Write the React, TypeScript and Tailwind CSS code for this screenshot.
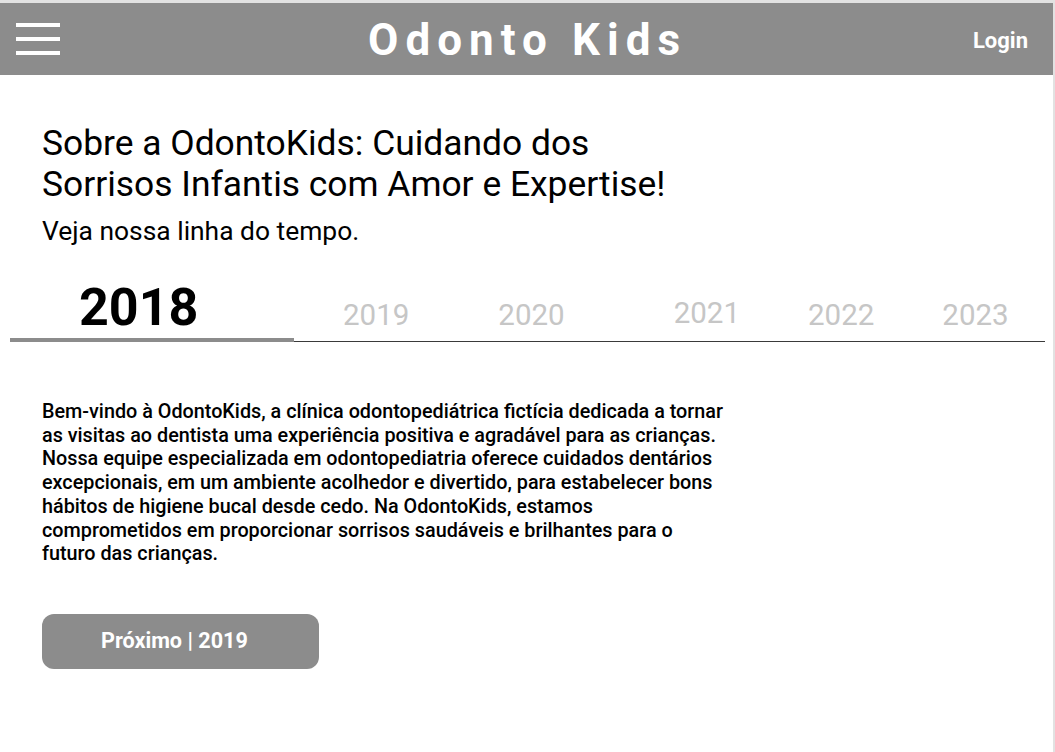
import React from "react";

const years = [
  { label: "2019", cls: "ml-[49px]" },
  { label: "2020", cls: "ml-[89px]" },
  { label: "2021", cls: "ml-[109px] -translate-y-[2px]" },
  { label: "2022", cls: "ml-[68px]" },
  { label: "2023", cls: "ml-[68px]" },
];

const lines = [
  "Bem-vindo à OdontoKids, a clínica odontopediátrica fictícia dedicada a tornar",
  "as visitas ao dentista uma experiência positiva e agradável para as crianças.",
  "Nossa equipe especializada em odontopediatria oferece cuidados dentários",
  "excepcionais, em um ambiente acolhedor e divertido, para estabelecer bons",
  "hábitos de higiene bucal desde cedo. Na OdontoKids, estamos",
  "comprometidos em proporcionar sorrisos saudáveis e brilhantes para o",
  "futuro das crianças.",
];

const App: React.FC = () => {
  return (
    <div
      className="w-[1055px] h-[752px] bg-white border-t-[3px] border-r-[2px] border-[#e2e2e2] overflow-hidden"
      style={{ fontFamily: "Roboto, 'Liberation Sans', sans-serif" }}
    >
      {/* Header */}
      <header className="h-[72px] bg-[#8c8c8c] flex items-center justify-between pl-[16px] pr-[25px] relative">
        <button className="flex flex-col gap-[10px] w-[44px]" aria-label="Menu">
          <span className="block h-[4px] w-full bg-white" />
          <span className="block h-[4px] w-full bg-white" />
          <span className="block h-[4px] w-full bg-white" />
        </button>
        <h1 className="absolute left-[368px] top-[11px] text-[44px] font-bold text-white tracking-[0.16em] leading-[52px]">
          Odonto Kids
        </h1>
        <a className="text-[22px] font-bold text-white mt-[2px]">Login</a>
      </header>

      {/* Intro */}
      <section className="pl-[42px] pt-[48px]">
        <h2 className="text-[35.4px] leading-[41px] text-black w-[720px]">
          Sobre a OdontoKids: Cuidando dos
          <br />
          Sorrisos Infantis com Amor e Expertise!
        </h2>
        <p className="text-[26.4px] leading-[30px] text-black mt-[11px]">Veja nossa linha do tempo.</p>
      </section>

      {/* Timeline */}
      <nav className="mx-[10px] mt-[33px] w-[1035px]">
        <div className="flex items-baseline h-[58px]">
          <span className="w-[284px] pl-[69px] text-[52px] font-bold text-black leading-[58px]">2018</span>
          {years.map((y) => (
            <span key={y.label} className={`${y.cls} text-[29.5px] text-[#c6c6c6] leading-[34px]`}>
              {y.label}
            </span>
          ))}
        </div>
        <div className="flex items-end mt-[1px]">
          <div className="w-[284px] h-[4px] bg-[#8c8c8c]" />
          <div className="flex-1 h-px bg-[#3a3a3a]" />
        </div>
      </nav>

      {/* Content */}
      <section className="pl-[42px] pt-[58px]">
        <p className="w-[720px] text-[19.8px] leading-[23.7px] font-medium text-black">
          {lines.map((l, i) => (
            <React.Fragment key={i}>
              {l}
              {i < lines.length - 1 && <br />}
            </React.Fragment>
          ))}
        </p>
        <button className="mt-[48px] w-[277px] h-[55px] rounded-[12px] bg-[#8c8c8c] text-white text-[21.6px] font-bold flex items-center pl-[59px]">
          Próximo | 2019
        </button>
      </section>
    </div>
  );
};

export default App;
